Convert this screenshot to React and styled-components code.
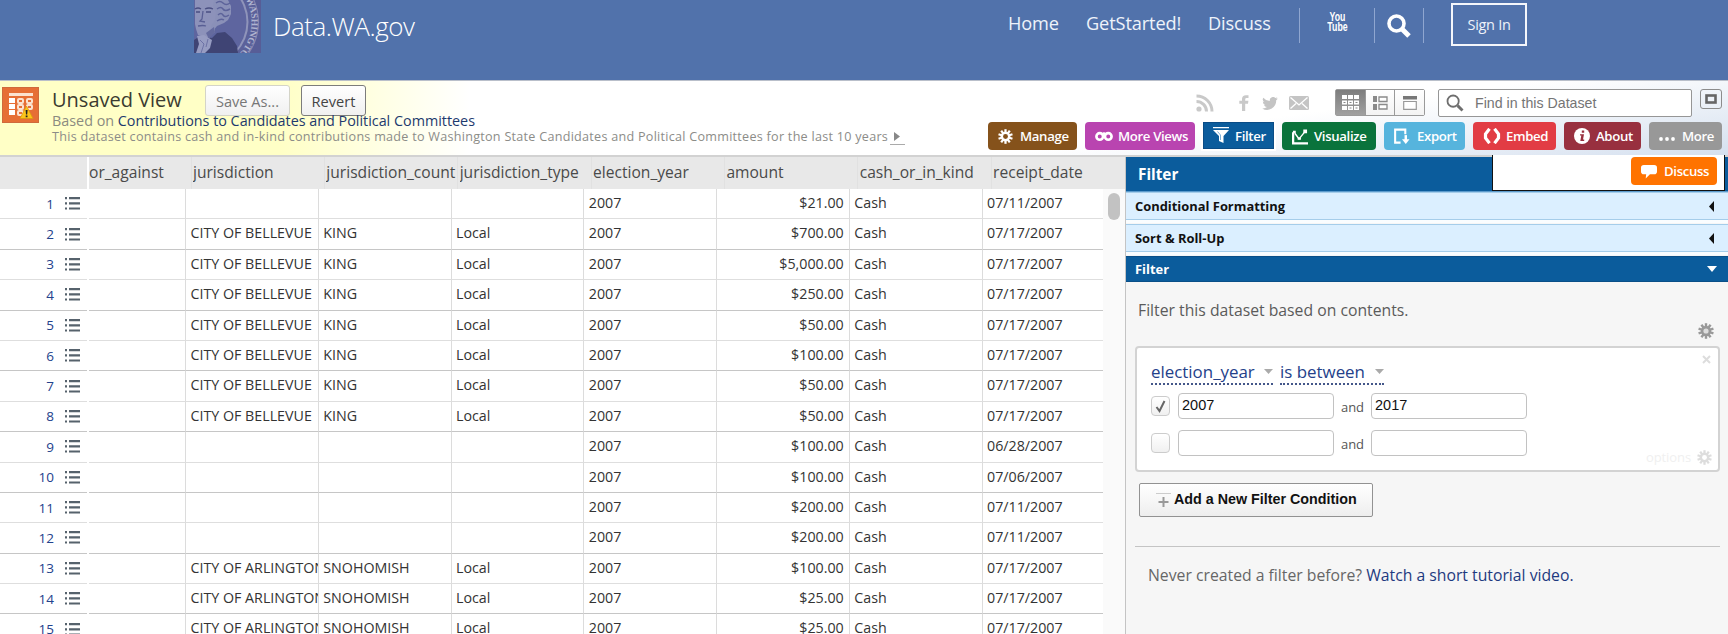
import React from "react";
import styled, { createGlobalStyle, css } from "styled-components";

const Global = createGlobalStyle`
  * { box-sizing: border-box; }
  html, body { margin: 0; padding: 0; overflow: hidden; background: #fff; }
  body { font-family: "Open Sans", "Liberation Sans", sans-serif; color: #333; }
`;

const Page = styled.div`
  width: 1728px;
  height: 634px;
  overflow: hidden;
  display: flex;
  flex-direction: column;
`;

/* ---------- site header ---------- */
const SiteHeader = styled.header`
  height: 81px;
  flex: none;
  background: #5172ab;
  border-bottom: 1px solid #b9bfca;
  display: flex;
  align-items: flex-start;
  padding-left: 194px;
`;
const SiteTitle = styled.div`
  margin: 8px 0 0 12px;
  width: 735px;
  font-size: 26px;
  line-height: 36px;
  font-weight: 300;
  letter-spacing: -0.45px;
  color: #fff;
`;
const NavLink = styled.a`
  font-size: 18.2px;
  line-height: 46px;
  letter-spacing: -0.12px;
  width: ${(p) => p.$w}px;
  white-space: nowrap;
  color: #eef2fa;
  flex: none;
`;
const NavIcon = styled.div`
  width: ${(p) => p.$w}px;
  height: 35px;
  margin-top: 8px;
  border-left: 1px solid #8fa6d0;
  border-right: ${(p) => (p.$end ? "1px solid #8fa6d0" : "none")};
  display: flex;
  align-items: center;
  justify-content: center;
  flex: none;
`;
const YouTube = styled.div`
  display: flex;
  flex-direction: column;
  align-items: center;
  color: #fff;
  font: bold 12.5px/10px "Liberation Sans", sans-serif;
  transform: scaleX(0.7);
  margin-top: -8px;
`;
const SignIn = styled.a`
  margin: 3px 0 0 27px;
  width: 76px;
  height: 43px;
  border: 2px solid #f4f6fb;
  color: #eef2fa;
  font-size: 14.5px;
  letter-spacing: -0.3px;
  line-height: 39px;
  text-align: center;
  flex: none;
`;

/* ---------- dataset info bar ---------- */
const InfoBar = styled.section`
  height: 76px;
  flex: none;
  border-bottom: 2px solid #d2d2d2;
  background: linear-gradient(to right, #ffffc6 0, #ffffc6 280px, rgba(255, 255, 255, 0) 470px),
    linear-gradient(172deg, #fff 68%, #d5e0ef 100%);
  display: flex;
  justify-content: space-between;
`;
const InfoLeft = styled.div`
  display: flex;
  padding: 6px 0 0 2px;
`;
const InfoText = styled.div`
  padding-left: 13px;
  white-space: nowrap;
`;
const TitleRow = styled.div`
  display: flex;
  height: 28px;
  margin-top: -2px;
`;
const ViewName = styled.h1`
  margin: 0;
  width: 153px;
  font-size: 20px;
  font-weight: 400;
  line-height: 30px;
  color: #3b3b30;
`;
const SmallButton = styled.button`
  position: relative;
  z-index: 0;
  height: 31px;
  width: ${(p) => p.$w}px;
  margin: 0 11px 0 0;
  padding: 0;
  border: ${(p) => (p.$dim ? "1px solid #d4d4c8" : "1px solid #7c7c7c")};
  border-radius: 3px;
  background: linear-gradient(#fff, #f0f0f0);
  color: ${(p) => (p.$dim ? "#777" : "#444")};
  font: 14.6px/28px "Open Sans", sans-serif;
`;
const BasedOn = styled.div`
  position: relative;
  font-size: 14.35px;
  line-height: 16px;
  color: #8b8b80;
  a { color: #1d3a6e; }
`;
const Description = styled.div`
  font-size: 12.6px;
  line-height: 15px;
  letter-spacing: 0.265px;
  color: #8c8c88;
  display: flex;
  align-items: flex-start;
`;
const Expander = styled.span`
  width: 15px;
  height: 16px;
  margin-left: 2px;
  border-bottom: 1px solid #aaa;
  padding: 3px 0 0 4px;
  display: inline-flex;
`;
const InfoRight = styled.div`
  padding: 8px 6px 0 0;
`;
const ToolsTop = styled.div`
  height: 33px;
  display: flex;
  justify-content: flex-end;
`;
const Share = styled.div`
  display: flex;
  align-items: center;
  height: 28px;
  svg { display: block; flex: none; }
`;
const Toggle = styled.div`
  display: flex;
  width: 90px;
  height: 27px;
  border: 1px solid #9a9a9a;
  border-radius: 2px;
  margin-right: 13px;
`;
const ToggleItem = styled.div`
  flex: 1;
  display: flex;
  align-items: center;
  justify-content: center;
  background: ${(p) => (p.$on ? "linear-gradient(#7d7d7d, #a0a0a0)" : "linear-gradient(#fff, #f3f3f3)")};
  & + & { border-left: 1px solid #9a9a9a; }
`;
const Search = styled.div`
  width: 254px;
  height: 28px;
  border: 1px solid #969696;
  border-radius: 2px;
  background: #fff;
  display: flex;
  align-items: center;
  padding-left: 7px;
  color: #757575;
  font: 14.2px "Liberation Sans", sans-serif;
  margin: 0 8px 0 0;
  svg { margin-right: 11px; }
`;
const FullScreen = styled.div`
  width: 22px;
  height: 20px;
  border: 1px solid #8c8c8c;
  border-radius: 3px;
  display: flex;
  align-items: center;
  justify-content: center;
`;
const Actions = styled.div`
  display: flex;
  justify-content: flex-end;
  gap: 8px;
`;
const ActionButton = styled.a`
  width: ${(p) => p.$w}px;
  height: 28px;
  border-radius: 4px;
  background: ${(p) => p.$bg};
  color: #fff;
  font-size: 13.2px;
  font-weight: 600;
  letter-spacing: -0.35px;
  white-space: nowrap;
  display: flex;
  align-items: center;
  padding-left: 10px;
  flex: none;
  svg { flex: none; margin-right: ${(p) => p.$gap || 7}px; }
  ${(p) =>
    p.$active &&
    css`
      height: 27px;
      border-radius: 0;
      border: 1px solid #0a4c86;
      outline: 2px solid #fff;
      padding-left: 9px;
    `}
`;

/* ---------- grid ---------- */
const Main = styled.main`
  flex: 1;
  min-height: 0;
  display: flex;
`;
const GridArea = styled.section`
  width: 1125px;
  flex: none;
  overflow: hidden;
  display: flex;
  flex-direction: column;
`;
const HeadRow = styled.div`
  height: 32px;
  flex: none;
  background: #e8e8e8;
  display: flex;
`;
const HeadFrozen = styled.div`
  width: 89px;
  flex: none;
  border-right: 2px solid #fff;
`;
const HeadCell = styled.div`
  width: ${(p) => p.$w || 133.35}px;
  flex: none;
  padding-left: ${(p) => (p.$first ? 0 : 1.5)}px;
  border-left: ${(p) => (p.$first ? "none" : "1px solid #e1e1e1")};
  font-size: 15.6px;
  line-height: 30px;
  color: #4a4a4a;
`;
const HeadLabel = styled.div`
  overflow: hidden;
  white-space: nowrap;
`;
const GridBody = styled.div`
  flex: 1;
  min-height: 0;
  display: flex;
`;
const Rows = styled.div`
  width: 1103px;
  flex: none;
  overflow: hidden;
`;
const Row = styled.div`
  height: 30.4px;
  display: flex;
`;
const line = css`
  border-bottom: 1px solid ${(p) => (p.$strong ? "#c6c6c6" : "#dedede")};
`;
const Frozen = styled.div`
  ${line}
  width: 87px;
  margin-right: 2px;
  flex: none;
  padding-right: 7px;
  display: flex;
  align-items: center;
  justify-content: flex-end;
  gap: 11px;
  font-size: 13.5px;
  color: #23428c;
`;
const Cell = styled.div`
  ${line}
  width: ${(p) => p.$w || 132.75}px;
  flex: none;
  overflow: hidden;
  white-space: nowrap;
  border-right: 1px solid #dcdcdc;
  padding: 0 5px 0 4.5px;
  font-size: 14.25px;
  line-height: 28px;
  text-align: ${(p) => (p.$right ? "right" : "left")};
  color: #333;
`;
const ScrollTrack = styled.div`
  flex: 1;
  background: #fafafa;
  padding: 4px 5px;
  div { width: 12px; height: 27px; border-radius: 6px; background: #c2c2c2; }
`;

/* ---------- side panel ---------- */
const Panel = styled.aside`
  flex: 1;
  min-width: 0;
  background: #f6f6f6;
  border-left: 1px solid #c4c4c4;
`;
const PanelHead = styled.div`
  height: 35px;
  background: #0b5c9c;
  border-bottom: 1px solid #5c9bcc;
  display: flex;
  justify-content: space-between;
  padding: 0 3px 0 12px;
  color: #fff;
  font-size: 15.3px;
  font-weight: 700;
  line-height: 34px;
`;
const DiscussBox = styled.div`
  width: 233px;
  height: 36px;
  margin-top: -2px;
  background: #fff;
  border: 1px solid #111;
  border-top: none;
  display: flex;
  justify-content: flex-end;
  padding: 2px 7px 0 0;
`;
const Section = styled.div`
  height: ${(p) => (p.$open ? 26 : 28)}px;
  margin-bottom: ${(p) => (p.$open ? 0 : 4)}px;
  background: ${(p) => (p.$open ? "#0b5c9c" : "#dbefff")};
  border: solid ${(p) => (p.$open ? "#0a4f88" : "#a5cdea")};
  border-width: 1px 0;
  box-shadow: 0 3px 0 ${(p) => (p.$open ? "transparent" : "#fafdff")};
  color: ${(p) => (p.$open ? "#fff" : "#111")};
  font-size: 12.9px;
  font-weight: 700;
  display: flex;
  align-items: center;
  justify-content: space-between;
  padding: 0 ${(p) => (p.$open ? 11 : 14)}px 0 9px;
`;
const Intro = styled.p`
  margin: 0;
  padding: 17px 0 0 12px;
  font-size: 15.75px;
  line-height: 22px;
  color: #5b5b5b;
`;
const GearRow = styled.div`
  display: flex;
  justify-content: flex-end;
  padding: 2px 14px 0 0;
  height: 25px;
`;
const FilterCard = styled.div`
  position: relative;
  margin: 0 8px 0 9px;
  height: 126px;
  background: #fff;
  border: 2px solid #d3d3d3;
  border-radius: 4px;
  padding: 12px 0 0 14px;
`;
const Terms = styled.div`
  display: flex;
  gap: 7px;
  height: 25px;
`;
const Term = styled.span`
  width: ${(p) => p.$w}px;
  border-bottom: 2px dotted #44578a;
  font-size: 16.9px;
  line-height: 23px;
  color: #24418a;
  display: flex;
  align-items: center;
  justify-content: space-between;
  white-space: nowrap;
`;
const ValueRow = styled.div`
  display: flex;
  align-items: center;
  margin-top: ${(p) => p.$mt}px;
  height: 26px;
  font-size: 13px;
  color: #555;
`;
const Check = styled.span`
  width: 19px;
  height: 20px;
  margin: 0 8px 0 0;
  border: 1px solid #ccc;
  border-radius: 4px;
  background: linear-gradient(#fff, #f0f0f0);
  display: flex;
  align-items: center;
  justify-content: center;
`;
const Field = styled.span`
  width: 156px;
  height: 26px;
  border: 1.5px solid #c2c2c2;
  border-radius: 4px;
  background: #fff;
  padding-left: 3px;
  font: 14.5px/22px "Liberation Sans", sans-serif;
  color: #111;
`;
const And = styled.span`
  width: 37px;
  padding-top: 1px;
  text-align: center;
`;
const Remove = styled.span`
  position: absolute;
  right: 7px;
  top: 7px;
  display: flex;
`;
const Options = styled.span`
  position: absolute;
  right: 6px;
  bottom: 4px;
  display: flex;
  align-items: center;
  gap: 6px;
  font-size: 13px;
  line-height: 18px;
  letter-spacing: -0.1px;
  color: #f0f0f0;
`;
const AddButton = styled.div`
  margin: 11px 0 0 13px;
  width: 234px;
  height: 34px;
  border: 1px solid #929292;
  border-radius: 2px;
  background: linear-gradient(#fff, #eee);
  font: bold 14.3px/30px "Liberation Sans", sans-serif;
  color: #111;
  display: flex;
  padding-left: 16px;
  white-space: nowrap;
  svg { margin: 9px 3px 0 0; flex: none; }
`;
const Rule = styled.div`
  margin: 29px 8px 0 9px;
  height: 1px;
  background: #c4c4c4;
`;
const Help = styled.p`
  margin: 17px 0 0 22px;
  font-size: 15.75px;
  line-height: 22px;
  color: #666;
  a { color: #1e3a80; }
`;

/* ---------- drawings ---------- */
const Portrait = () => (
  <svg width="67" height="53" viewBox="0 0 67 53" style={{ flex: "none" }}>
    <rect width="67" height="53" fill="#575d97" />
    <circle cx="10" cy="22" r="55" fill="#8388b3" />
    <circle cx="10" cy="22" r="54" fill="#5b619a" />
    <circle cx="10" cy="22" r="44.500" fill="#8f94ba" />
    <circle cx="10" cy="22" r="42.500" fill="#5e659f" />
    <path d="M0 53V40l6-4 12 2 5-5 8-1 7 6 5 8 1 7z" fill="#3f4474" />
    <path d="M1 0h22l3 8-1 12-4 6v6l-8 6-9-3-2-6-1-5z" fill="#8d92ba" />
    <path d="M20 0h14l3 6v8l-3 6-4 3-7 3-4 5-2-5 4-6 1-8-3-6z" fill="#8a90b8" />
    <path d="M22 3q4-3 7 0t7 0M23 9q4-3 6 0t7 0M24 15q3-3 5 0t6 0M23 21q4-3 7-1" stroke="#5d639a" fill="none" strokeWidth="1.500" />
    <path d="M1 9q3-2 6 0M11 9q4-2 8 0M2 12h4M12 12h5" stroke="#4a4f82" fill="none" strokeWidth="1.300" />
    <path d="M9 11l-1 8-2 2 5 1M4 26q5-1 8 0" stroke="#595f94" fill="none" strokeWidth="1.300" />
    <path d="M12 33l8-6 1 5-6 7z" fill="#646a9e" />
    <path d="M3 36l7-1 8 5-2 8-5 5H2l3-9z" fill="#979cc2" />
    <path d="M6 40l4 4-3 9M14 39l-2 8" stroke="#6d72a5" fill="none" />
    <defs>
      <path id="rim" d="M51.200 -1.800A47.500 47.500 0 0 1 34 63" />
    </defs>
    <text fontFamily="Liberation Serif" fontSize="9.500" fontWeight="bold" fill="#b0b4d0">
      <textPath href="#rim" startOffset="1">WASHINGTON</textPath>
    </text>
  </svg>
);
const Magnifier = ({ size, color, w = 3.6 }) => (
  <svg width={size} height={size} viewBox="0 0 24 24" fill="none" stroke={color}>
    <circle cx="9.5" cy="9.5" r="7.5" strokeWidth={w} />
    <path d="M15.5 15.5L22 22" strokeWidth={w + 1.4} />
  </svg>
);
const DatasetIcon = () => (
  <svg width="37" height="36" viewBox="0 0 37 36" style={{ flex: "none" }}>
    <rect width="37" height="36" fill="#e66f35" />
    <rect x=".5" y=".5" width="36" height="35" fill="none" stroke="#cf6a3c" />
    <path d="M7 6h24v3H7z" fill="#fbe3d0" />
    <path d="M7 11h6v5H7zM7 17h6v5H7zM7 23h6v5H7z" fill="#fff" />
    <g fill="none" stroke="#fbe3d0" strokeWidth="2">
      <rect x="16" y="12" width="5" height="4" rx="1" />
      <rect x="25" y="12" width="5" height="4" rx="1" />
      <rect x="16" y="18" width="5" height="4" rx="1" />
      <rect x="25" y="18" width="5" height="4" rx="1" />
      <rect x="16" y="24" width="5" height="4" rx="1" />
    </g>
    <path d="M24.500 19L31 31.500H18z" fill="#fcc419" stroke="#d99a10" strokeWidth=".8" strokeLinejoin="round" />
    <path d="M23.600 23h2l-.4 4.500h-1.200zM23.700 28.500h1.800v1.800h-1.800z" fill="#222" />
  </svg>
);
const Gear = ({ size = 15, color = "#fff", hole = "#85521b" }) => (
  <svg width={size} height={size} viewBox="-8 -8 16 16">
    {[0, 36, 72, 108, 144].map((a) => (
      <rect key={a} x="-1.2" y="-7.8" width="2.400" height="15.600" fill={color} transform={`rotate(${a})`} />
    ))}
    <circle r="5.200" fill={color} />
    <circle r="2.600" fill={hole} />
  </svg>
);
const Rss = () => (
  <svg width="18" height="18" viewBox="0 0 18 18" style={{ marginRight: 25 }}>
    <circle cx="3" cy="15" r="2.600" fill="#c9c9c9" />
    <path d="M.5 7.500A10 10 0 0 1 10.500 17.500M.5 2A15.500 15.500 0 0 1 16 17.500" fill="none" stroke="#c9c9c9" strokeWidth="3" />
  </svg>
);
const Facebook = () => (
  <svg width="10" height="16" viewBox="0 0 10 16" style={{ marginRight: 13 }}>
    <path d="M3 16V8.700H.3V5.700H3V4Q3 .3 7 .2h2.500V3H7.600Q6.200 3 6.200 4.400v1.300h3.200L9 8.700H6.200V16z" fill="#c9c9c9" />
  </svg>
);
const Twitter = () => (
  <svg width="16" height="13" viewBox="0 0 24 20" style={{ marginRight: 11 }}>
    <path d="M24 2.400a10 10 0 0 1-2.800.8A4.900 4.900 0 0 0 23.300.5a10 10 0 0 1-3.100 1.200 4.900 4.900 0 0 0-8.400 4.500A14 14 0 0 1 1.700 1a4.900 4.900 0 0 0 1.500 6.600A5 5 0 0 1 1 7a4.900 4.900 0 0 0 4 4.900 5 5 0 0 1-2.300 0 4.900 4.900 0 0 0 4.600 3.500A10 10 0 0 1 0 17.500a14 14 0 0 0 21.500-12.600A10 10 0 0 0 24 2.400z" fill="#c4c4c4" />
  </svg>
);
const Mail = () => (
  <svg width="20" height="14" viewBox="0 0 20 14" style={{ marginRight: 26 }}>
    <rect width="20" height="14" rx="1.500" fill="#c4c4c4" />
    <path d="M1.500 1.500L10 9l8.500-7.500M1.500 12.500l5.500-5M18.500 12.500l-5.500-5" fill="none" stroke="#fff" strokeWidth="1.300" />
  </svg>
);
const TableIcon = () => (
  <svg width="17" height="15" viewBox="0 0 17 15">
    <path d="M0 0h5v4H0zM6 0h5v4H6zM12 0h5v4h-5zM0 5.500h5v4H0zM6 5.500h5v4H6zM12 5.500h5v4h-5zM0 11h5v4H0zM6 11h5v4H6zM12 11h5v4h-5z" fill="#fff" />
    <path d="M7.500 7h2v1h-2zM13.500 7h2v1h-2zM1.500 7h2v1h-2zM7.500 12.500h2v1h-2zM13.500 12.500h2v1h-2z" fill="#888" />
  </svg>
);
const ListIcon = () => (
  <svg width="15" height="14" viewBox="0 0 15 14">
    <path d="M0 0h4v6H0zM0 8h4v6H0z" fill="#8a8a8a" />
    <path d="M6 1h8v4.500H6zM6 8.500h8V13H6z" fill="#fff" stroke="#8a8a8a" strokeWidth="1.300" />
  </svg>
);
const PageIcon = () => (
  <svg width="14" height="14" viewBox="0 0 14 14">
    <path d="M0 0h14v3.500H0z" fill="#777" />
    <path d="M.7 5.500h12.600v7.800H.7z" fill="#fff" stroke="#999" strokeWidth="1.200" />
  </svg>
);
const Binoculars = () => (
  <svg width="18" height="12" viewBox="0 0 19 12" fill="none" stroke="#fff" strokeWidth="2.800">
    <circle cx="5" cy="6.500" r="3.500" />
    <circle cx="14" cy="6.500" r="3.500" />
    <path d="M8 3.500h3" />
  </svg>
);
const Funnel = () => (
  <svg width="16" height="17" viewBox="0 0 16 17">
    <path d="M0 0h16v1.200H0zM0 3h16L10.500 9v7L6 14V9z" fill="#fff" />
    <path d="M4.500 4.500L7.500 8v5" fill="none" stroke="#7fb1d8" />
  </svg>
);
const Chart = () => (
  <svg width="16" height="17" viewBox="0 0 17 17" fill="none" stroke="#fff">
    <path d="M1.200 4v11.800H17" strokeWidth="2.400" />
    <path d="M3 5l4.500 6L14 3" strokeWidth="1.500" />
    <path d="M12 1h4v4h-4zM6 9.500h3.500V12H6zM1 2.500h3V5H1z" fill="#fff" stroke="none" />
  </svg>
);
const Export = () => (
  <svg width="16" height="17" viewBox="0 0 17 17" fill="none" stroke="#fff">
    <path d="M7 15H1.200V1.200H12V6" strokeWidth="2.200" />
    <path d="M12.500 7v6" strokeWidth="2.600" />
    <path d="M8.500 11.500h8l-4 5z" fill="#fff" stroke="none" />
  </svg>
);
const Brackets = () => (
  <svg width="18" height="16" viewBox="0 0 18 16" fill="none" stroke="#fff" strokeWidth="3.200">
    <path d="M6.500.8L2.500 6v4l4 5.200M11.500.8l4 5.200v4l-4 5.200" />
  </svg>
);
const InfoIcon = () => (
  <svg width="16" height="16" viewBox="0 0 16 16">
    <circle cx="8" cy="8" r="8" fill="#fff" />
    <path d="M7.800 2.500h2.400v2.300H7.800zM6 6.200h4l-1 5.300h1.200v1.500H6.300L7.300 7.600H6z" fill="#98303f" />
  </svg>
);
const Dots = () => (
  <svg width="16" height="16" viewBox="0 0 16 16" fill="#fff">
    <circle cx="2" cy="11" r="1.900" />
    <circle cx="8" cy="11" r="1.900" />
    <circle cx="14" cy="11" r="1.900" />
  </svg>
);
const Bubble = () => (
  <svg width="16" height="15" viewBox="0 0 17 15">
    <path d="M3 .5h11q3 0 3 3v4q0 3-3 3H9.500L5 15l.5-4.500H3q-3 0-3-3v-4q0-3 3-3z" fill="#fff" />
  </svg>
);
const RowMenu = () => (
  <svg width="15" height="13" viewBox="0 0 15 13" fill="#56626c">
    <path d="M0 0h2v2.200H0zM4 0h11v2.200H4zM0 5.200h2v2.200H0zM4 5.200h11v2.200H4zM0 10.400h2v2.200H0zM4 10.400h11v2.200H4z" />
  </svg>
);
const Arrow = ({ w, h, d, color }) => (
  <svg width={w} height={h} viewBox="0 0 10 10" preserveAspectRatio="none">
    <path d={d} fill={color} />
  </svg>
);
const LEFT = "M10 0v10L0 5z";
const RIGHT = "M0 0v10l10-5z";
const DOWN = "M0 0h10L5 10z";

/* ---------- data ---------- */
const columns = [
  "jurisdiction",
  "jurisdiction_count",
  "jurisdiction_type",
  "election_year",
  "amount",
  "cash_or_in_kind",
  "receipt_date",
];
const B = ["CITY OF BELLEVUE", "KING", "Local"];
const A = ["CITY OF ARLINGTON", "SNOHOMISH", "Local"];
const N = ["", "", ""];
const rows = [
  [N, "$21.00", "07/11/2007"],
  [B, "$700.00", "07/17/2007"],
  [B, "$5,000.00", "07/17/2007"],
  [B, "$250.00", "07/17/2007"],
  [B, "$50.00", "07/17/2007"],
  [B, "$100.00", "07/17/2007"],
  [B, "$50.00", "07/17/2007"],
  [B, "$50.00", "07/17/2007"],
  [N, "$100.00", "06/28/2007"],
  [N, "$100.00", "07/06/2007"],
  [N, "$200.00", "07/11/2007"],
  [N, "$200.00", "07/11/2007"],
  [A, "$100.00", "07/17/2007"],
  [A, "$25.00", "07/17/2007"],
  [A, "$25.00", "07/17/2007"],
];

const GridRow = ({ n, row: [place, amount, date] }) => {
  const strong = n % 2 === 0;
  return (
    <Row>
      <Frozen $strong={strong}>
        {n}
        <RowMenu />
      </Frozen>
      <Cell $strong={strong} $w={97} />
      {place.map((t, i) => (
        <Cell key={i} $strong={strong}>{t}</Cell>
      ))}
      <Cell $strong={strong}>2007</Cell>
      <Cell $strong={strong} $right>{amount}</Cell>
      <Cell $strong={strong}>Cash</Cell>
      <Cell $strong={strong} $w={121}>{date}</Cell>
    </Row>
  );
};

export default function App() {
  return (
    <Page>
      <Global />
      <SiteHeader>
        <Portrait />
        <SiteTitle>Data.WA.gov</SiteTitle>
        <NavLink $w={78}>Home</NavLink>
        <NavLink $w={122}>GetStarted!</NavLink>
        <NavLink $w={91}>Discuss</NavLink>
        <NavIcon $w={75}>
          <YouTube><span>You</span><span>Tube</span></YouTube>
        </NavIcon>
        <NavIcon $w={50} $end>
          <Magnifier size={24} color="#fff" />
        </NavIcon>
        <SignIn>Sign In</SignIn>
      </SiteHeader>

      <InfoBar>
        <InfoLeft>
          <DatasetIcon />
          <InfoText>
            <TitleRow>
              <ViewName>Unsaved View</ViewName>
              <SmallButton $w={85} $dim>Save As...</SmallButton>
              <SmallButton $w={65}>Revert</SmallButton>
            </TitleRow>
            <BasedOn>
              Based on <a>Contributions to Candidates and Political Committees</a>
            </BasedOn>
            <Description>
              This dataset contains cash and in-kind contributions made to Washington State Candidates and Political Committees for the last 10 years
              <Expander><Arrow w={6} h={9} d={RIGHT} color="#888" /></Expander>
            </Description>
          </InfoText>
        </InfoLeft>
        <InfoRight>
          <ToolsTop>
            <Share>
              <Rss />
              <Facebook />
              <Twitter />
              <Mail />
            </Share>
            <Toggle>
              <ToggleItem $on><TableIcon /></ToggleItem>
              <ToggleItem><ListIcon /></ToggleItem>
              <ToggleItem><PageIcon /></ToggleItem>
            </Toggle>
            <Search>
              <Magnifier size={18} color="#6e6e6e" w={2.4} />
              Find in this Dataset
            </Search>
            <FullScreen>
              <svg width="12" height="10"><rect x="1.500" y="1.500" width="9" height="7" fill="none" stroke="#666" strokeWidth="2.600" /></svg>
            </FullScreen>
          </ToolsTop>
          <Actions>
            <ActionButton $w={89} $bg="#85521b"><Gear />Manage</ActionButton>
            <ActionButton $w={110} $bg="#b944b0" $gap={5}><Binoculars />More Views</ActionButton>
            <ActionButton $w={71} $bg="#0b5c9c" $active $gap={6}><Funnel />Filter</ActionButton>
            <ActionButton $w={94} $bg="#0a733c" $gap={6}><Chart />Visualize</ActionButton>
            <ActionButton $w={81} $bg="#56b4dd"><Export />Export</ActionButton>
            <ActionButton $w={83} $bg="#e23c44" $gap={5}><Brackets />Embed</ActionButton>
            <ActionButton $w={77} $bg="#98303f" $gap={6}><InfoIcon />About</ActionButton>
            <ActionButton $w={73} $bg="#989898"><Dots />More</ActionButton>
          </Actions>
        </InfoRight>
      </InfoBar>

      <Main>
        <GridArea>
          <HeadRow>
            <HeadFrozen />
            <HeadCell $first $w={101.500}><HeadLabel>or_against</HeadLabel></HeadCell>
            {columns.map((c) => (
              <HeadCell key={c}><HeadLabel>{c}</HeadLabel></HeadCell>
            ))}
          </HeadRow>
          <GridBody>
            <Rows>
              {rows.map((r, i) => (
                <GridRow key={i} n={i + 1} row={r} />
              ))}
            </Rows>
            <ScrollTrack><div /></ScrollTrack>
          </GridBody>
        </GridArea>

        <Panel>
          <PanelHead>
            Filter
            <DiscussBox>
              <ActionButton $w={86} $bg="#ff7300"><Bubble />Discuss</ActionButton>
            </DiscussBox>
          </PanelHead>
          <Section>Conditional Formatting<Arrow w={5} h={11} d={LEFT} color="#111" /></Section>
          <Section>Sort &amp; Roll-Up<Arrow w={5} h={11} d={LEFT} color="#111" /></Section>
          <Section $open>Filter<Arrow w={10} h={6} d={DOWN} color="#fff" /></Section>
          <Intro>Filter this dataset based on contents.</Intro>
          <GearRow><Gear size={16} color="#999" hole="#ddd" /></GearRow>
          <FilterCard>
            <Terms>
              <Term $w={122}>election_year<Arrow w={9} h={5} d={DOWN} color="#aaa" /></Term>
              <Term $w={104}>is between<Arrow w={9} h={5} d={DOWN} color="#aaa" /></Term>
            </Terms>
            <ValueRow $mt={8}>
              <Check>
                <svg width="11" height="13" viewBox="0 0 11 13"><path d="M1.500 7l3 4L9.500 1" fill="none" stroke="#666" strokeWidth="2" /></svg>
              </Check>
              <Field>2007</Field><And>and</And><Field>2017</Field>
            </ValueRow>
            <ValueRow $mt={11}>
              <Check />
              <Field /><And>and</And><Field />
            </ValueRow>
            <Remove>
              <svg width="9" height="9"><path d="M1 1l7 7M8 1L1 8" stroke="#ddd" strokeWidth="2" /></svg>
            </Remove>
            <Options>options <Gear size={15} color="#ddd" hole="#fff" /></Options>
          </FilterCard>
          <AddButton>
            <svg width="15" height="15"><path d="M0 .5h15" stroke="#ccc" /><path d="M7.500 4v10M2.500 9h10" stroke="#999" strokeWidth="2" /></svg>
            Add a New Filter Condition
          </AddButton>
          <Rule />
          <Help>Never created a filter before? <a>Watch a short tutorial video.</a></Help>
        </Panel>
      </Main>
    </Page>
  );
}
